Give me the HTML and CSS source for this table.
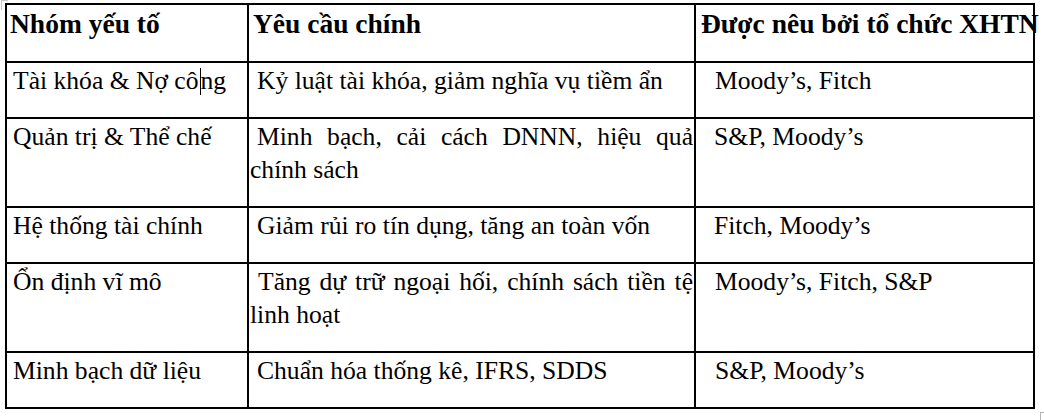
FILE: index.html
```html
<!DOCTYPE html>
<html lang="vi">
<head>
<meta charset="utf-8">
<title>Bảng yêu cầu</title>
<link rel="stylesheet" href="styles.css">
</head>
<body>
<span class="handle-tl"></span>
<table class="req">
  <colgroup>
    <col class="c1">
    <col class="c2">
    <col class="c3">
  </colgroup>
  <thead>
    <tr>
      <th class="h1">Nhóm yếu tố</th>
      <th class="h2">Yêu cầu chính</th>
      <th class="h3">Được nêu bởi tổ chức XHTN</th>
    </tr>
  </thead>
  <tbody>
    <tr>
      <td class="d1 d1-in">Tài khóa &amp; Nợ cô<span class="caret"></span>ng</td>
      <td class="d2">Kỷ luật tài khóa, giảm nghĩa vụ tiềm ẩn</td>
      <td class="d3">Moody’s, Fitch</td>
    </tr>
    <tr>
      <td class="d1">Quản trị &amp; Thể chế</td>
      <td class="d2">Minh bạch, cải cách DNNN, hiệu quả chính sách</td>
      <td class="d3 d3-less">S&amp;P, Moody’s</td>
    </tr>
    <tr>
      <td class="d1">Hệ thống tài chính</td>
      <td class="d2">Giảm rủi ro tín dụng, tăng an toàn vốn</td>
      <td class="d3 d3-less">Fitch, Moody’s</td>
    </tr>
    <tr>
      <td class="d1">Ổn định vĩ mô</td>
      <td class="d2 d2-more">Tăng dự trữ ngoại hối, chính sách tiền tệ linh hoạt</td>
      <td class="d3">Moody’s, Fitch, S&amp;P</td>
    </tr>
    <tr>
      <td class="d1">Minh bạch dữ liệu</td>
      <td class="d2">Chuẩn hóa thống kê, IFRS, SDDS</td>
      <td class="d3">S&amp;P, Moody’s</td>
    </tr>
  </tbody>
</table>
<span class="handle-br"></span>
</body>
</html>
```

FILE: styles.css
```css
html, body {
  margin: 0;
  padding: 0;
  background: #fff;
}

body {
  position: relative;
  width: 1044px;
  height: 420px;
  overflow: hidden;
  font-family: "Liberation Serif", "Times New Roman", serif;
  color: #000;
}

.req {
  border-collapse: collapse;
  margin: 3px 0 0 5px;
  table-layout: fixed;
  width: 1030px;
}

.c1 { width: 242px; }
.c2 { width: 447px; }
.c3 { width: 339px; }

.req th,
.req td {
  border: 2px solid #000;
  vertical-align: top;
  text-align: left;
}

.req th {
  font-weight: bold;
  font-size: 27.5px;
  line-height: 37px;
  padding: 0 0 19px 0;
  white-space: nowrap;
}

.h1 { padding-left: 3px !important; }
.h2 { padding-left: 4px !important; }
.h3 { padding-left: 5px !important; }

.req td {
  font-weight: normal;
  font-size: 25.6px;
  line-height: 33px;
  padding: 1px 0 20px 0;
}

.d1 { padding-left: 6px !important; }
.d1-in { padding-left: 6px !important; }

.d2 {
  padding-left: 1px !important;
  padding-right: 1px !important;
  text-indent: 7px;
  text-align: justify !important;
}
.d2-more { text-indent: 8px; }

.d3 { padding-left: 19px !important; }
.d3-less { padding-left: 18px !important; }

.caret {
  display: inline-block;
  width: 1px;
  height: 27px;
  background: #000;
  vertical-align: -6px;
  margin: 0 -0.5px 0 1.5px;
}

.handle-tl {
  position: absolute;
  left: 1px;
  top: 0;
  width: 6px;
  height: 9px;
  border-left: 1px solid #c8c8c8;
  border-top: 1px solid #c8c8c8;
}

.handle-br {
  position: absolute;
  left: 1040px;
  top: 412px;
  width: 7px;
  height: 7px;
  border: 1px solid #b4b4b4;
  background: #fff;
}
```
